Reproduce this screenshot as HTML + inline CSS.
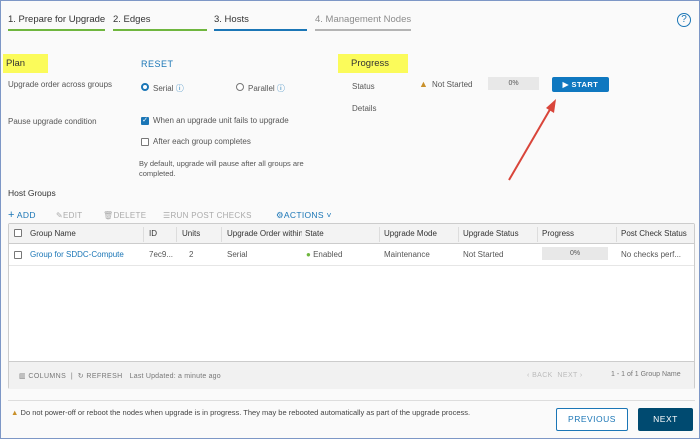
<!DOCTYPE html>
<html><head><style>
*{margin:0;padding:0;box-sizing:border-box}
body{width:700px;height:439px;background:#fafafa;font-family:"Liberation Sans",sans-serif;color:#565656;position:relative;overflow:hidden;font-size:8px}
.a{position:absolute;white-space:nowrap}
.tab{position:absolute;top:14px;font-size:9.5px;color:#333}
.ul{position:absolute;top:29px;height:2px}
.hl{position:absolute;background:#fbfb5a;font-size:9.5px;color:#333;padding:4px 3px}
.cb{position:absolute;width:8px;height:8px;border:1px solid #777;border-radius:1px;background:#fff}
th,td{text-align:left;font-weight:normal}
.col{position:absolute;top:0;height:15px;border-left:1px solid #ddd}
</style></head><body>
<div class="a" style="left:0;top:0;width:700px;height:439px;border:1px solid #7d97c6"></div>
<div class="tab" style="left:8px">1. Prepare for Upgrade</div>
<div class="tab" style="left:113px">2. Edges</div>
<div class="tab" style="left:214px">3. Hosts</div>
<div class="tab" style="left:315px;color:#8c8c8c">4. Management Nodes</div>
<div class="ul" style="left:8px;width:97px;background:#6fb63e"></div>
<div class="ul" style="left:113px;width:94px;background:#6fb63e"></div>
<div class="ul" style="left:214px;width:93px;background:#1b76b6"></div>
<div class="ul" style="left:315px;width:96px;background:#b4b4b4"></div>
<div class="a" style="left:677px;top:13px;width:14px;height:14px;border:1.2px solid #1b76b6;border-radius:50%;color:#1b76b6;font-size:10px;text-align:center;line-height:12px">?</div>

<div class="hl" style="left:3px;top:54px;width:45px;height:19px">Plan</div>
<div class="a" style="left:141px;top:59px;font-size:9px;color:#1b76b6;letter-spacing:.5px">RESET</div>
<div class="hl" style="left:338px;top:54px;width:70px;height:19px;padding-left:13px">Progress</div>

<div class="a" style="left:8px;top:80px">Upgrade order across groups</div>
<div class="a" style="left:141px;top:83px;width:8px;height:8px;border-radius:50%;border:2.5px solid #1b76b6;background:#fff"></div>
<div class="a" style="left:153px;top:83px">Serial <span style="color:#1b76b6">ⓘ</span></div>
<div class="a" style="left:236px;top:83px;width:8px;height:8px;border-radius:50%;border:1px solid #777;background:#fff"></div>
<div class="a" style="left:248px;top:83px">Parallel <span style="color:#1b76b6">ⓘ</span></div>

<div class="a" style="left:352px;top:82px">Status</div>
<div class="a" style="left:419px;top:79px;color:#c9902a;font-size:9px">▲</div>
<div class="a" style="left:432px;top:80px">Not Started</div>
<div class="a" style="left:488px;top:77px;width:51px;height:13px;background:#e8e8e8;text-align:center;line-height:13px;font-size:7px">0%</div>
<div class="a" style="left:552px;top:77px;width:57px;height:15px;background:#0f78c0;border-radius:2px;color:#fff;font-size:7.5px;font-weight:bold;text-align:center;line-height:15px;letter-spacing:.5px">▶ START</div>
<div class="a" style="left:352px;top:104px">Details</div>

<svg class="a" style="left:0;top:0" width="700" height="200"><line x1="509" y1="180" x2="552" y2="106" stroke="#d9453a" stroke-width="2"/><polygon points="556,99 554,113 546,108" fill="#d9453a"/></svg>

<div class="a" style="left:8px;top:117px">Pause upgrade condition</div>
<div class="cb" style="left:141px;top:117px;background:#1b76b6;border-color:#1b76b6;color:#fff;font-size:7px;line-height:6px;text-align:center">✓</div>
<div class="a" style="left:153px;top:116px">When an upgrade unit fails to upgrade</div>
<div class="cb" style="left:141px;top:138px"></div>
<div class="a" style="left:153px;top:137px">After each group completes</div>
<div class="a" style="left:139px;top:159px;font-size:7.5px;line-height:10px">By default, upgrade will pause after all groups are<br>completed.</div>

<div class="a" style="left:8px;top:188px;font-size:8.5px;color:#333">Host Groups</div>
<div class="a" style="left:8px;top:209px;font-size:8.5px;color:#1b76b6;letter-spacing:.3px"><span style="font-size:11px">+</span> ADD</div>
<div class="a" style="left:56px;top:211px;color:#aaa;letter-spacing:.3px">✎EDIT</div>
<div class="a" style="left:103px;top:211px;color:#aaa;letter-spacing:.3px">🗑︎DELETE</div>
<div class="a" style="left:163px;top:211px;color:#aaa;letter-spacing:.3px">☰RUN POST CHECKS</div>
<div class="a" style="left:276px;top:210px;color:#1b76b6;letter-spacing:.3px;font-size:8.5px">⚙ACTIONS ˅</div>

<div class="a" style="left:8px;top:223px;width:687px;height:166px;border:1px solid #ccc;background:#fff;border-radius:2px">
  <div class="a" style="left:0;top:0;width:685px;height:20px;background:#f3f3f3;border-bottom:1px solid #ccc"></div>
  <div class="a" style="left:0;top:41px;width:685px;height:1px;background:#e6e6e6"></div>
  <div class="a" style="left:0;top:137px;width:685px;height:28px;background:#f1f1f1;border-top:1px solid #ccc"></div>
  <div class="cb" style="left:5px;top:5px"></div>
  <div class="a" style="left:21px;top:5px;color:#333">Group Name</div>
  <div class="a" style="left:140px;top:5px;color:#333">ID</div>
  <div class="a" style="left:173px;top:5px;color:#333">Units</div>
  <div class="a" style="left:218px;top:5px;color:#333;width:75px;overflow:hidden">Upgrade Order within</div>
  <div class="a" style="left:296px;top:5px;color:#333">State</div>
  <div class="a" style="left:375px;top:5px;color:#333">Upgrade Mode</div>
  <div class="a" style="left:454px;top:5px;color:#333">Upgrade Status</div>
  <div class="a" style="left:533px;top:5px;color:#333">Progress</div>
  <div class="a" style="left:612px;top:5px;color:#333">Post Check Status</div>
  <div class="col" style="left:134px;top:3px"></div><div class="col" style="left:167px;top:3px"></div><div class="col" style="left:212px;top:3px"></div><div class="col" style="left:370px;top:3px"></div><div class="col" style="left:449px;top:3px"></div><div class="col" style="left:528px;top:3px"></div><div class="col" style="left:607px;top:3px"></div>
  <div class="cb" style="left:5px;top:27px"></div>
  <div class="a" style="left:21px;top:26px;color:#1b76b6">Group for SDDC-Compute</div>
  <div class="a" style="left:140px;top:26px">7ec9...</div>
  <div class="a" style="left:180px;top:26px">2</div>
  <div class="a" style="left:218px;top:26px">Serial</div>
  <div class="a" style="left:297px;top:26px"><span style="color:#6fb63e">●</span> Enabled</div>
  <div class="a" style="left:375px;top:26px">Maintenance</div>
  <div class="a" style="left:454px;top:26px">Not Started</div>
  <div class="a" style="left:533px;top:23px;width:66px;height:13px;background:#e8e8e8;text-align:center;line-height:13px;font-size:7px">0%</div>
  <div class="a" style="left:612px;top:26px">No checks perf...</div>
  <div class="a" style="left:10px;top:148px;font-size:7px;color:#777;letter-spacing:.4px">▥ COLUMNS &nbsp;| &nbsp;↻ REFRESH &nbsp; <span style="letter-spacing:.2px">Last Updated: a minute ago</span></div>
  <div class="a" style="left:518px;top:148px;font-size:7px;color:#bbb;letter-spacing:.4px">‹ BACK &nbsp;NEXT ›</div>
  <div class="a" style="left:602px;top:147px;font-size:7px;color:#777">1 - 1 of 1 Group Name</div>
</div>

<div class="a" style="left:8px;top:400px;width:687px;height:1px;background:#ddd"></div>
<div class="a" style="left:11px;top:408px;font-size:7.5px;color:#444"><span style="color:#c9902a">▲</span> Do not power-off or reboot the nodes when upgrade is in progress. They may be rebooted automatically as part of the upgrade process.</div>
<div class="a" style="left:556px;top:408px;width:72px;height:23px;border:1px solid #1b76b6;border-radius:2px;color:#1b76b6;font-size:8.5px;text-align:center;line-height:21px;letter-spacing:.5px;background:#fff">PREVIOUS</div>
<div class="a" style="left:638px;top:408px;width:55px;height:23px;background:#004a70;border-radius:2px;color:#fff;font-size:8.5px;text-align:center;line-height:23px;letter-spacing:.5px">NEXT</div>
</body></html>
